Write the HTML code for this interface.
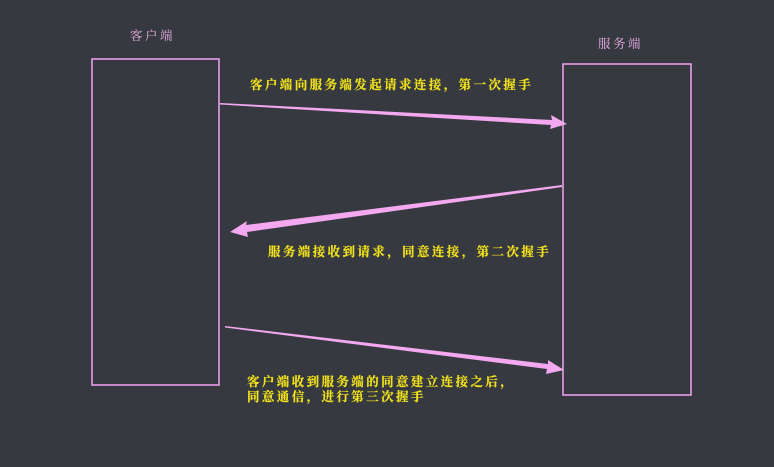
<!DOCTYPE html>
<html><head><meta charset="utf-8"><style>
html,body{margin:0;padding:0;background:#363a40;width:774px;height:467px;overflow:hidden}
svg{display:block}
text{font-family:"Liberation Serif","Noto Serif CJK SC",serif;font-weight:bold}
.y{fill:#f2e21a;stroke:#f2e21a;stroke-width:0.2;font-size:12.5px;letter-spacing:2.4px}
.p{fill:#eeb0ee;font-size:12.5px;letter-spacing:2.5px;font-weight:normal}
</style></head><body>
<svg width="774" height="467" viewBox="0 0 774 467">
<rect x="92" y="59" width="127" height="326" fill="none" stroke="#f2a4f2" stroke-width="1.5"/>
<rect x="563" y="64" width="128" height="331" fill="none" stroke="#f2a4f2" stroke-width="1.5"/>
<text class="p" x="130" y="40">客户端</text>
<text class="p" x="598" y="48">服务端</text>
<polygon fill="#f4a8f0" points="220,103 552,120 551,115 567,124 550,129 551,125 220,104.5"/>
<polygon fill="#f4a8f0" points="562,185 246,225 247,221 230,232 248,237 247,232 562,187"/>
<polygon fill="#f4a8f0" points="225,326 548,364 548,360 564,370 546,374 547,369 225,327.5"/>
<text class="y" x="250" y="89">客户端向服务端发起请求连接，第一次握手</text>
<text class="y" x="268" y="256">服务端接收到请求，同意连接，第二次握手</text>
<text class="y" x="247" y="386">客户端收到服务端的同意建立连接之后，</text>
<text class="y" x="247" y="401">同意通信，进行第三次握手</text>
</svg>
</body></html>
